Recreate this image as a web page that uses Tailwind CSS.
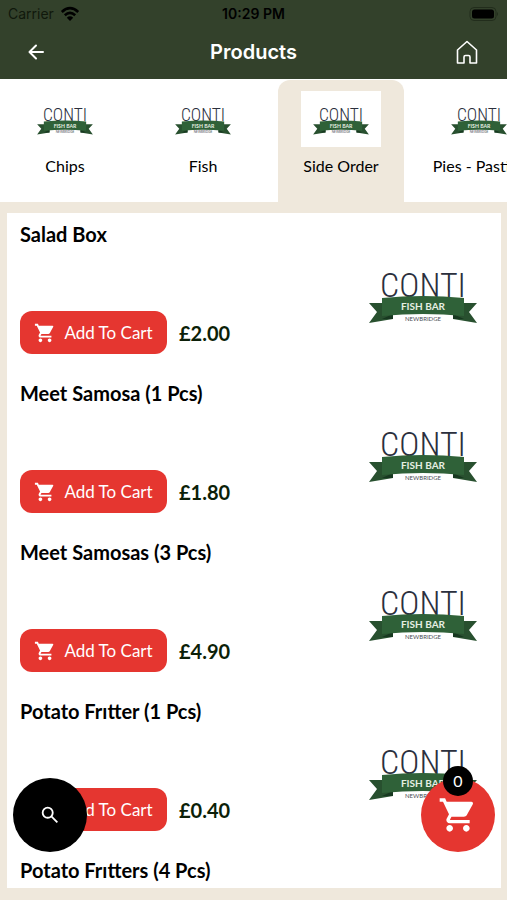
<!DOCTYPE html>
<html lang="en">
<head>
  <meta charset="UTF-8" />
  <meta name="viewport" content="width=device-width, initial-scale=1.0"/>
  <title>Products</title>
  <script src="https://cdn.jsdelivr.net/npm/@tailwindcss/browser@4"></script>
</head>
<body class="h-screen flex flex-col overflow-hidden bg-[#efe8dc] text-black font-['Lato',sans-serif]">

  <!-- Shared drawings -->
  <svg class="hidden" aria-hidden="true">
    <symbol id="logo" viewBox="0 0 108 62">
      <text x="54" y="35" font-size="34" font-weight="300" fill="#2b2f3d" text-anchor="middle" font-family="Roboto Condensed, Liberation Sans Narrow, Liberation Sans, sans-serif">CONTI</text>
      <path d="M0 41 H24 V57 L0 61 L8 50 Z M108 41 H84 V57 L108 61 L100 50 Z" fill="#28502f"/>
      <path d="M13 57 L24 52 V57 Z M95 57 L84 52 V57 Z" fill="#173820"/>
      <path d="M13 36 Q54 32 95 36 V54 Q54 50 13 54 Z" fill="#2f6138"/>
      <text x="54" y="48" font-size="10" font-weight="700" fill="#e6efe3" text-anchor="middle" font-family="Lato, sans-serif">FISH BAR</text>
      <text x="54" y="59" font-size="6" fill="#4a4d55" text-anchor="middle" font-family="Lato, sans-serif">NEWBRIDGE</text>
    </symbol>
    <symbol id="cart" viewBox="0 0 24 24">
      <path fill="currentColor" d="M7 18c-1.1 0-1.99.9-1.99 2S5.9 22 7 22s2-.9 2-2-.9-2-2-2zM1 2v2h2l3.6 7.59-1.35 2.45c-.16.28-.25.61-.25.96 0 1.1.9 2 2 2h12v-2H7.42c-.14 0-.25-.11-.25-.25l.03-.12.9-1.63h7.45c.75 0 1.41-.41 1.75-1.03l3.58-6.49A1.003 1.003 0 0 0 20 4H5.21l-.94-2H1zm16 16c-1.1 0-1.99.9-1.99 2s.89 2 1.99 2 2-.9 2-2-.9-2-2-2z"/>
    </symbol>
  </svg>

  <!-- Header -->
  <header class="shrink-0 bg-[#33412b] font-['Inter',sans-serif]">
    <div class="grid grid-cols-3 items-center h-7 px-2 text-sm text-black">
      <div class="flex items-center gap-1.5">
        <span class="text-[#10180c]">Carrier</span>
        <svg class="w-5 h-4" viewBox="0 0 20 16" fill="none" stroke="#000" stroke-width="2.6">
          <path d="M1.8 6 Q10 -1.6 18.2 6"/>
          <path d="M4.8 9.3 Q10 4.6 15.2 9.3"/>
          <path d="M10 15 L6.8 11.7 Q10 9 13.2 11.7 Z" fill="#000" stroke="none"/>
        </svg>
      </div>
      <span class="text-center font-semibold">10:29 PM</span>
      <svg class="justify-self-end w-8 h-4" viewBox="0 0 32 16">
        <rect x="3" y="1.5" width="26" height="13" rx="4" fill="none" stroke="#222d1c"/>
        <rect x="5" y="3.5" width="22" height="9" rx="2.5" fill="#000"/>
        <path d="M30 6 Q32 8 30 10 Z" fill="#222d1c"/>
      </svg>
    </div>
    <div class="grid grid-cols-3 items-center h-[51px] px-6 pb-1 text-white">
      <button type="button" aria-label="Back" class="w-6 h-6">
        <svg class="w-6 h-6" viewBox="0 0 24 24" fill="none" stroke="currentColor" stroke-width="2" stroke-linecap="round" stroke-linejoin="round"><path d="M19 12H6M12 5.5L5.5 12L12 18.5"/></svg>
      </button>
      <h1 class="text-xl font-semibold text-center">Products</h1>
      <button type="button" aria-label="Home" class="justify-self-end w-8 h-6 flex justify-center">
        <svg class="w-6 h-6" viewBox="0 0 24 24" fill="none" stroke="currentColor" stroke-width="1.6" stroke-linejoin="round"><path d="M2.5 10L12 1.5L21.5 10V23H15V17Q15 15.5 13.5 15.5H10.5Q9 15.5 9 17V23H2.5Z"/></svg>
      </button>
    </div>
  </header>

  <!-- Categories -->
  <nav class="shrink-0 flex gap-3 px-0.5 pt-px bg-white overflow-hidden text-base">
    <a href="#chips" class="shrink-0 w-[126px] h-[122px] pt-[11px] flex flex-col items-center gap-[7px]">
      <span class="w-20 h-14 flex items-center justify-center bg-white"><svg class="w-[58px] h-8"><use href="#logo"/></svg></span>
      <span>Chips</span>
    </a>
    <a href="#fish" class="shrink-0 w-[126px] h-[122px] pt-[11px] flex flex-col items-center gap-[7px]">
      <span class="w-20 h-14 flex items-center justify-center bg-white"><svg class="w-[58px] h-8"><use href="#logo"/></svg></span>
      <span>Fish</span>
    </a>
    <a href="#side-order" aria-current="page" class="shrink-0 w-[126px] h-[122px] pt-[11px] flex flex-col items-center gap-[7px] rounded-t-xl bg-[#efe8dc]">
      <span class="w-20 h-14 flex items-center justify-center bg-white"><svg class="w-[58px] h-8"><use href="#logo"/></svg></span>
      <span>Side Order</span>
    </a>
    <a href="#pies" class="shrink-0 w-[126px] h-[122px] pt-[11px] flex flex-col items-center gap-[7px]">
      <span class="w-20 h-14 flex items-center justify-center bg-white"><svg class="w-[58px] h-8"><use href="#logo"/></svg></span>
      <span class="whitespace-nowrap">Pies - Pasties</span>
    </a>
  </nav>

  <!-- Products -->
  <main class="flex-1 min-h-0 mt-[11px] mb-3 ml-[7px] mr-1.5 bg-white overflow-y-auto [scrollbar-width:none]">
    <article class="h-[159px] pl-[13px] pr-6 pt-[7px] pb-[18px] flex justify-between">
      <div class="flex flex-col justify-between">
        <h2 class="text-xl font-bold">Salad Box</h2>
        <div class="flex items-center gap-3">
          <button type="button" class="h-[43px] w-[147px] flex items-center justify-center gap-2 rounded-xl bg-[#e53630] text-white text-[17px]"><svg class="w-[22px] h-[22px]"><use href="#cart"/></svg>Add To Cart</button>
          <span class="text-xl font-bold text-[#0c1f08]">£2.00</span>
        </div>
      </div>
      <svg class="w-[108px] h-[62px] mt-[42px]" role="img" aria-label="Conti Fish Bar"><use href="#logo"/></svg>
    </article>
    <article class="h-[159px] pl-[13px] pr-6 pt-[7px] pb-[18px] flex justify-between">
      <div class="flex flex-col justify-between">
        <h2 class="text-xl font-bold">Meet Samosa (1 Pcs)</h2>
        <div class="flex items-center gap-3">
          <button type="button" class="h-[43px] w-[147px] flex items-center justify-center gap-2 rounded-xl bg-[#e53630] text-white text-[17px]"><svg class="w-[22px] h-[22px]"><use href="#cart"/></svg>Add To Cart</button>
          <span class="text-xl font-bold text-[#0c1f08]">£1.80</span>
        </div>
      </div>
      <svg class="w-[108px] h-[62px] mt-[42px]" role="img" aria-label="Conti Fish Bar"><use href="#logo"/></svg>
    </article>
    <article class="h-[159px] pl-[13px] pr-6 pt-[7px] pb-[18px] flex justify-between">
      <div class="flex flex-col justify-between">
        <h2 class="text-xl font-bold">Meet Samosas (3 Pcs)</h2>
        <div class="flex items-center gap-3">
          <button type="button" class="h-[43px] w-[147px] flex items-center justify-center gap-2 rounded-xl bg-[#e53630] text-white text-[17px]"><svg class="w-[22px] h-[22px]"><use href="#cart"/></svg>Add To Cart</button>
          <span class="text-xl font-bold text-[#0c1f08]">£4.90</span>
        </div>
      </div>
      <svg class="w-[108px] h-[62px] mt-[42px]" role="img" aria-label="Conti Fish Bar"><use href="#logo"/></svg>
    </article>
    <article class="h-[159px] pl-[13px] pr-6 pt-[7px] pb-[18px] flex justify-between">
      <div class="flex flex-col justify-between">
        <h2 class="text-xl font-bold">Potato Frıtter (1 Pcs)</h2>
        <div class="flex items-center gap-3">
          <button type="button" class="h-[43px] w-[147px] flex items-center justify-center gap-2 rounded-xl bg-[#e53630] text-white text-[17px]"><svg class="w-[22px] h-[22px]"><use href="#cart"/></svg>Add To Cart</button>
          <span class="text-xl font-bold text-[#0c1f08]">£0.40</span>
        </div>
      </div>
      <svg class="w-[108px] h-[62px] mt-[42px]" role="img" aria-label="Conti Fish Bar"><use href="#logo"/></svg>
    </article>
    <article class="pl-[13px] pr-6 pt-[7px]">
      <h2 class="text-xl font-bold">Potato Frıtters (4 Pcs)</h2>
    </article>
  </main>

  <!-- Floating buttons -->
  <button type="button" aria-label="Search" class="fixed left-[13px] bottom-12 w-[74px] h-[74px] flex items-center justify-center rounded-full bg-black text-white">
    <svg class="w-[22px] h-[22px]" viewBox="0 0 24 24" fill="none" stroke="currentColor" stroke-width="2"><circle cx="9.5" cy="9.5" r="5.5"/><path d="M13.8 13.8L20 20"/></svg>
  </button>
  <button type="button" aria-label="Cart" class="fixed right-3 bottom-12 w-[74px] h-[74px] flex items-center justify-center rounded-full bg-[#e53630] text-white">
    <svg class="w-10 h-10"><use href="#cart"/></svg>
    <span class="absolute -top-3 left-[22px] w-[30px] h-[30px] flex items-center justify-center rounded-full bg-black text-base">0</span>
  </button>
</body>
</html>
